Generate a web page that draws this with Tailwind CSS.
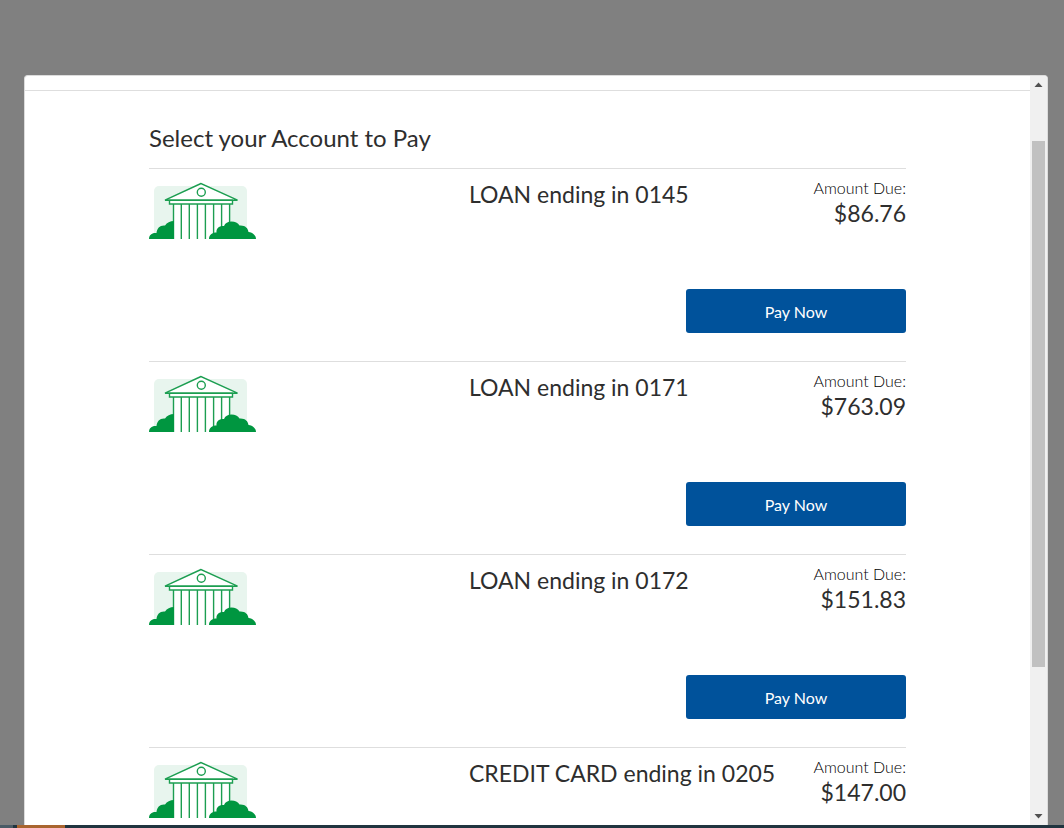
<!DOCTYPE html>
<html lang="en">
<head>
    <meta charset="UTF-8">
    <meta name="viewport" content="width=device-width, initial-scale=1.0">
    <title>Select your Account to Pay</title>
    <script src="https://cdn.jsdelivr.net/npm/@tailwindcss/browser@4"></script>
</head>
<body class="h-screen flex flex-col overflow-hidden bg-[#808080] font-['Lato',sans-serif] text-[#2e2e2e]">
    <!-- Bank illustration, shared by every account -->
    <svg class="hidden">
        <symbol id="bank" viewBox="0 0 107 58">
            <rect x="5" y="4" width="93" height="53" rx="5" fill="#e8f5ee"/>
            <path d="M24 20H81V57H24Z" fill="#fff"/>
            <g fill="#fff" stroke="#1c9e51" stroke-width="1.4">
                <path d="M52 1.5L16 18.200H88.500Z"/>
                <path d="M20.500 18.200H83.500V22H20.500Z"/>
                <circle cx="52.3" cy="10.3" r="4"/>
            </g>
            <path d="M24.5 22V57M32.3 22V57M40.3 22V57M48.4 22V57M56.4 22V57M64.6 22V57M72.6 22V57M80.6 22V57" fill="none" stroke="#1c9e51" stroke-width="1.4"/>
            <path d="M0 57C0 53 3 50.500 7.500 51C8 46 11 43 16 43.500C18 40.500 21 39 25 39V57Z" fill="#009640"/>
            <path d="M60 57C60 53 63 50.500 67.500 50.500C67 46 70.500 43.500 75 44C76 41 79 39.500 82.500 39.500C86 39.500 89 41 90.500 43.500C96 43 99 46 99.500 50C104 50.500 107 53.500 107 57Z" fill="#009640"/>
        </symbol>
    </svg>

    <!-- Dialog -->
    <div class="flex-1 min-h-0 mt-[75px] ml-6 mr-4 flex border border-b-0 border-[#dcdcdc] rounded-t-sm bg-white overflow-hidden">
        <main class="flex-1 min-w-0 overflow-hidden">
            <div class="h-[15px] border-b border-[#dedede]"></div>
            <div class="px-[124px]">
                <h1 class="pt-[31px] pb-[14px] text-2xl leading-8">Select your Account to Pay</h1>

                <section class="flex flex-col border-t border-[#dedede] pt-3 pb-7">
                    <div class="flex items-start h-[108px]">
                        <div class="w-80 shrink-0 pt-px"><svg class="w-[107px] h-[58px]"><use href="#bank"/></svg></div>
                        <h2 class="flex-1 text-[23px] leading-[26px]">LOAN ending in 0145</h2>
                        <p class="text-right"><span class="block text-base leading-[14px] font-light text-black">Amount Due:</span><span class="block text-[23px] leading-9">$86.76</span></p>
                    </div>
                    <button type="button" class="self-end w-[220px] h-11 pt-0.5 rounded-[3px] bg-[#00529b] text-base text-white cursor-pointer">Pay Now</button>
                </section>

                <section class="flex flex-col border-t border-[#dedede] pt-3 pb-7">
                    <div class="flex items-start h-[108px]">
                        <div class="w-80 shrink-0 pt-px"><svg class="w-[107px] h-[58px]"><use href="#bank"/></svg></div>
                        <h2 class="flex-1 text-[23px] leading-[26px]">LOAN ending in 0171</h2>
                        <p class="text-right"><span class="block text-base leading-[14px] font-light text-black">Amount Due:</span><span class="block text-[23px] leading-9">$763.09</span></p>
                    </div>
                    <button type="button" class="self-end w-[220px] h-11 pt-0.5 rounded-[3px] bg-[#00529b] text-base text-white cursor-pointer">Pay Now</button>
                </section>

                <section class="flex flex-col border-t border-[#dedede] pt-3 pb-7">
                    <div class="flex items-start h-[108px]">
                        <div class="w-80 shrink-0 pt-px"><svg class="w-[107px] h-[58px]"><use href="#bank"/></svg></div>
                        <h2 class="flex-1 text-[23px] leading-[26px]">LOAN ending in 0172</h2>
                        <p class="text-right"><span class="block text-base leading-[14px] font-light text-black">Amount Due:</span><span class="block text-[23px] leading-9">$151.83</span></p>
                    </div>
                    <button type="button" class="self-end w-[220px] h-11 pt-0.5 rounded-[3px] bg-[#00529b] text-base text-white cursor-pointer">Pay Now</button>
                </section>

                <section class="flex items-start border-t border-[#dedede] pt-3">
                    <div class="w-80 shrink-0 pt-px"><svg class="w-[107px] h-[58px]"><use href="#bank"/></svg></div>
                    <h2 class="flex-1 text-[23px] leading-[26px]">CREDIT CARD ending in 0205</h2>
                    <p class="text-right"><span class="block text-base leading-[14px] font-light text-black">Amount Due:</span><span class="block text-[23px] leading-9">$147.00</span></p>
                </section>
            </div>
        </main>

        <!-- Scrollbar -->
        <div class="w-[17px] shrink-0 flex flex-col items-center bg-[#f0f0f0]">
            <svg class="w-[17px] h-[17px] shrink-0" viewBox="0 0 17 17"><path d="M8.500 6.500L12.500 11H4.500Z" fill="#505050"/></svg>
            <div class="flex-1 w-[13px] flex flex-col">
                <div class="grow-[48]"></div>
                <div class="grow-[526] bg-[#c1c1c1]"></div>
                <div class="grow-[141]"></div>
            </div>
            <svg class="w-[17px] h-[17px] shrink-0" viewBox="0 0 17 17"><path d="M8.500 10.500L12.500 6H4.500Z" fill="#505050"/></svg>
        </div>
    </div>

    <!-- Taskbar edge -->
    <div class="h-[3px] shrink-0 flex bg-[#20343f]">
        <div class="w-[13px] bg-[#4a5b66]"></div>
        <div class="w-12 ml-1 bg-[#a9652f]"></div>
    </div>
</body>
</html>
